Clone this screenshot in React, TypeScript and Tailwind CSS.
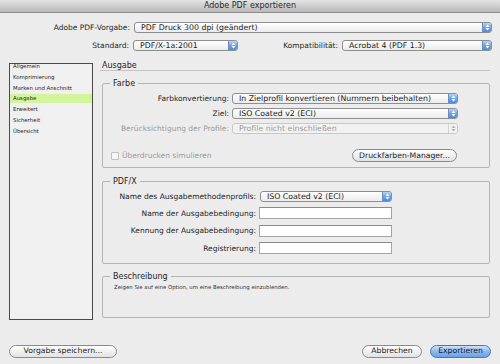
import React from 'react'

const font = { fontFamily: '"DejaVu Sans", "Liberation Sans", sans-serif' }

function Arrows({ disabled }: { disabled?: boolean }) {
  return (
    <svg width="5" height="7" viewBox="0 0 5 7" className="block">
      <path d="M2.5 0.5 L4.5 3 L0.5 3 Z" fill={disabled ? '#b0b0b0' : '#fff'} />
      <path d="M2.5 6.5 L4.5 4 L0.5 4 Z" fill={disabled ? '#b0b0b0' : '#fff'} />
    </svg>
  )
}

function Select({ value, className = '', disabled }: { value: string; className?: string; disabled?: boolean }) {
  return (
    <div
      className={`flex h-[11px] items-stretch rounded-[3px] border ${
        disabled ? 'border-[#c8c8c8] bg-[#f2f2f2] text-[#9a9a9a]' : 'border-[#8e8e8e] bg-gradient-to-b from-white to-[#ececec] text-[#1a1a1a]'
      } ${className}`}
    >
      <span className="flex-1 truncate pl-[6px] text-[7.8px] leading-[9px]">{value}</span>
      <span
        className={`flex w-[9px] items-center justify-center rounded-r-[2px] border-l ${
          disabled ? 'border-[#d0d0d0] bg-[#f2f2f2]' : 'border-[#6c8fc0] bg-gradient-to-b from-[#b7d3f4] via-[#6da3e4] to-[#4f8ad8]'
        }`}
      >
        <Arrows disabled={disabled} />
      </span>
    </div>
  )
}

function Input({ className = '' }: { className?: string }) {
  return <div className={`h-[12px] border border-[#a4a4a4] border-t-[#8a8a8a] bg-white ${className}`} />
}

function Button({ label, primary, className = '' }: { label: string; primary?: boolean; className?: string }) {
  return (
    <button
      className={`flex h-[13px] items-center justify-center rounded-full border text-[7.7px] leading-none ${
        primary
          ? 'border-[#4a74b4] bg-gradient-to-b from-[#cfe2f9] via-[#8cb8ee] to-[#6aa0e6] text-[#0d1a33]'
          : 'border-[#8a8a8a] bg-gradient-to-b from-white to-[#e2e2e2] text-[#1a1a1a]'
      } ${className}`}
      style={font}
    >
      {label}
    </button>
  )
}

const navItems = ['Allgemein', 'Komprimierung', 'Marken und Anschnitt', 'Ausgabe', 'Erweitert', 'Sicherheit', 'Übersicht']

export default function App() {
  return (
    <div className="flex h-[364px] w-[500px] flex-col bg-[#ececec] text-[7.5px] text-[#1e1e1e]" style={font}>
      {/* title bar */}
      <div className="flex h-[13px] items-center justify-center border-b border-[#8c8c8c] bg-gradient-to-b from-[#e4e4e4] to-[#b9b9b9] text-[8px] text-[#2a2a2a]">
        Adobe PDF exportieren
      </div>

      {/* presets */}
      <div className="flex items-center pt-[9px]">
        <span className="w-[130px] text-right">Adobe PDF-Vorgabe:</span>
        <Select value="PDF Druck 300 dpi (geändert)" className="ml-[4px] w-[358px]" />
      </div>
      <div className="mt-[7px] flex items-center">
        <span className="w-[129px] text-right">Standard:</span>
        <Select value="PDF/X-1a:2001" className="ml-[4px] w-[105px]" />
        <span className="w-[100px] text-right">Kompatibilität:</span>
        <Select value="Acrobat 4 (PDF 1.3)" className="ml-[4px] w-[150px]" />
      </div>

      {/* main */}
      <div className="mt-[11px] flex">
        <div className="ml-[9px] h-[257px] w-[84px] border border-[#4a4a4a] bg-[#f0f0f0] text-[5.4px]">
          <div className="-mt-[1.5px] flex flex-col gap-[1.83px]">
            {navItems.map(item => (
              <div key={item} className={`h-[9px] pl-[3px] leading-[9px] ${item === 'Ausgabe' ? 'bg-[#d2f59c]' : ''}`}>
                {item}
              </div>
            ))}
          </div>
        </div>

        <div className="ml-[7px] flex w-[390px] flex-col">
          <div className="border-b border-[#c4c4c4] pb-[1px] pl-[2px] text-[8px] leading-[6px]">Ausgabe</div>

          {/* Farbe */}
          <fieldset className="mt-[8px] ml-[2px] h-[89px] w-[388px] rounded-[2px] border border-[#b4b4b4] px-0">
            <legend className="ml-[7px] px-[3px] text-[8px] leading-[9px]">Farbe</legend>
            <div className="mt-[5px] flex flex-col gap-[4px]">
              <div className="flex items-center">
                <span className="w-[126px] text-right">Farbkonvertierung:</span>
                <Select value="In Zielprofil konvertieren (Nummern beibehalten)" className="ml-[3px] w-[226px]" />
              </div>
              <div className="flex items-center">
                <span className="w-[126px] text-right">Ziel:</span>
                <Select value="ISO Coated v2 (ECI)" className="ml-[3px] w-[226px]" />
              </div>
              <div className="flex items-center">
                <span className="w-[126px] text-right text-[#9a9a9a]">Berücksichtigung der Profile:</span>
                <Select value="Profile nicht einschließen" className="ml-[3px] w-[226px]" disabled />
              </div>
            </div>
            <div className="mt-[15px] flex items-center">
              <span className="ml-[8px] h-[8px] w-[8px] rounded-[1px] border border-[#c0c0c0] bg-[#f6f6f6]" />
              <span className="ml-[3px] text-[#9a9a9a]">Überdrucken simulieren</span>
              <Button label="Druckfarben-Manager..." className="ml-auto mr-[32px] w-[105px]" />
            </div>
          </fieldset>

          {/* PDF/X */}
          <fieldset className="mt-[9px] ml-[2px] h-[87px] w-[388px] rounded-[2px] border border-[#b4b4b4]">
            <legend className="ml-[7px] px-[3px] text-[8px] leading-[9px]">PDF/X</legend>
            <div className="mt-[5px] flex flex-col gap-[5.5px]">
              <div className="flex items-center">
                <span className="w-[153px] text-right">Name des Ausgabemethodenprofils:</span>
                <Select value="ISO Coated v2 (ECI)" className="ml-[4px] w-[132px]" />
              </div>
              <div className="flex items-center">
                <span className="w-[153px] text-right">Name der Ausgabebedingung:</span>
                <Input className="ml-[3px] w-[133px]" />
              </div>
              <div className="flex items-center">
                <span className="w-[153px] text-right">Kennung der Ausgabebedingung:</span>
                <Input className="ml-[3px] w-[133px]" />
              </div>
              <div className="flex items-center">
                <span className="w-[153px] text-right">Registrierung:</span>
                <Input className="ml-[3px] w-[133px]" />
              </div>
            </div>
          </fieldset>

          {/* Beschreibung */}
          <fieldset className="mt-[8px] ml-[2px] h-[46px] w-[388px] rounded-[2px] border border-[#b4b4b4]">
            <legend className="ml-[7px] px-[3px] text-[8px] leading-[9px]">Beschreibung</legend>
            <div className="mt-[2px] pl-[11px] text-[5.4px] text-[#333]">
              Zeigen Sie auf eine Option, um eine Beschreibung einzublenden.
            </div>
          </fieldset>
        </div>
      </div>

      {/* footer */}
      <div className="mt-[25px] flex items-center">
        <Button label="Vorgabe speichern..." className="ml-[9px] w-[108px]" />
        <Button label="Abbrechen" className="ml-auto w-[60px]" />
        <Button label="Exportieren" primary className="ml-[8px] mr-[9px] w-[61px]" />
      </div>
    </div>
  )
}
